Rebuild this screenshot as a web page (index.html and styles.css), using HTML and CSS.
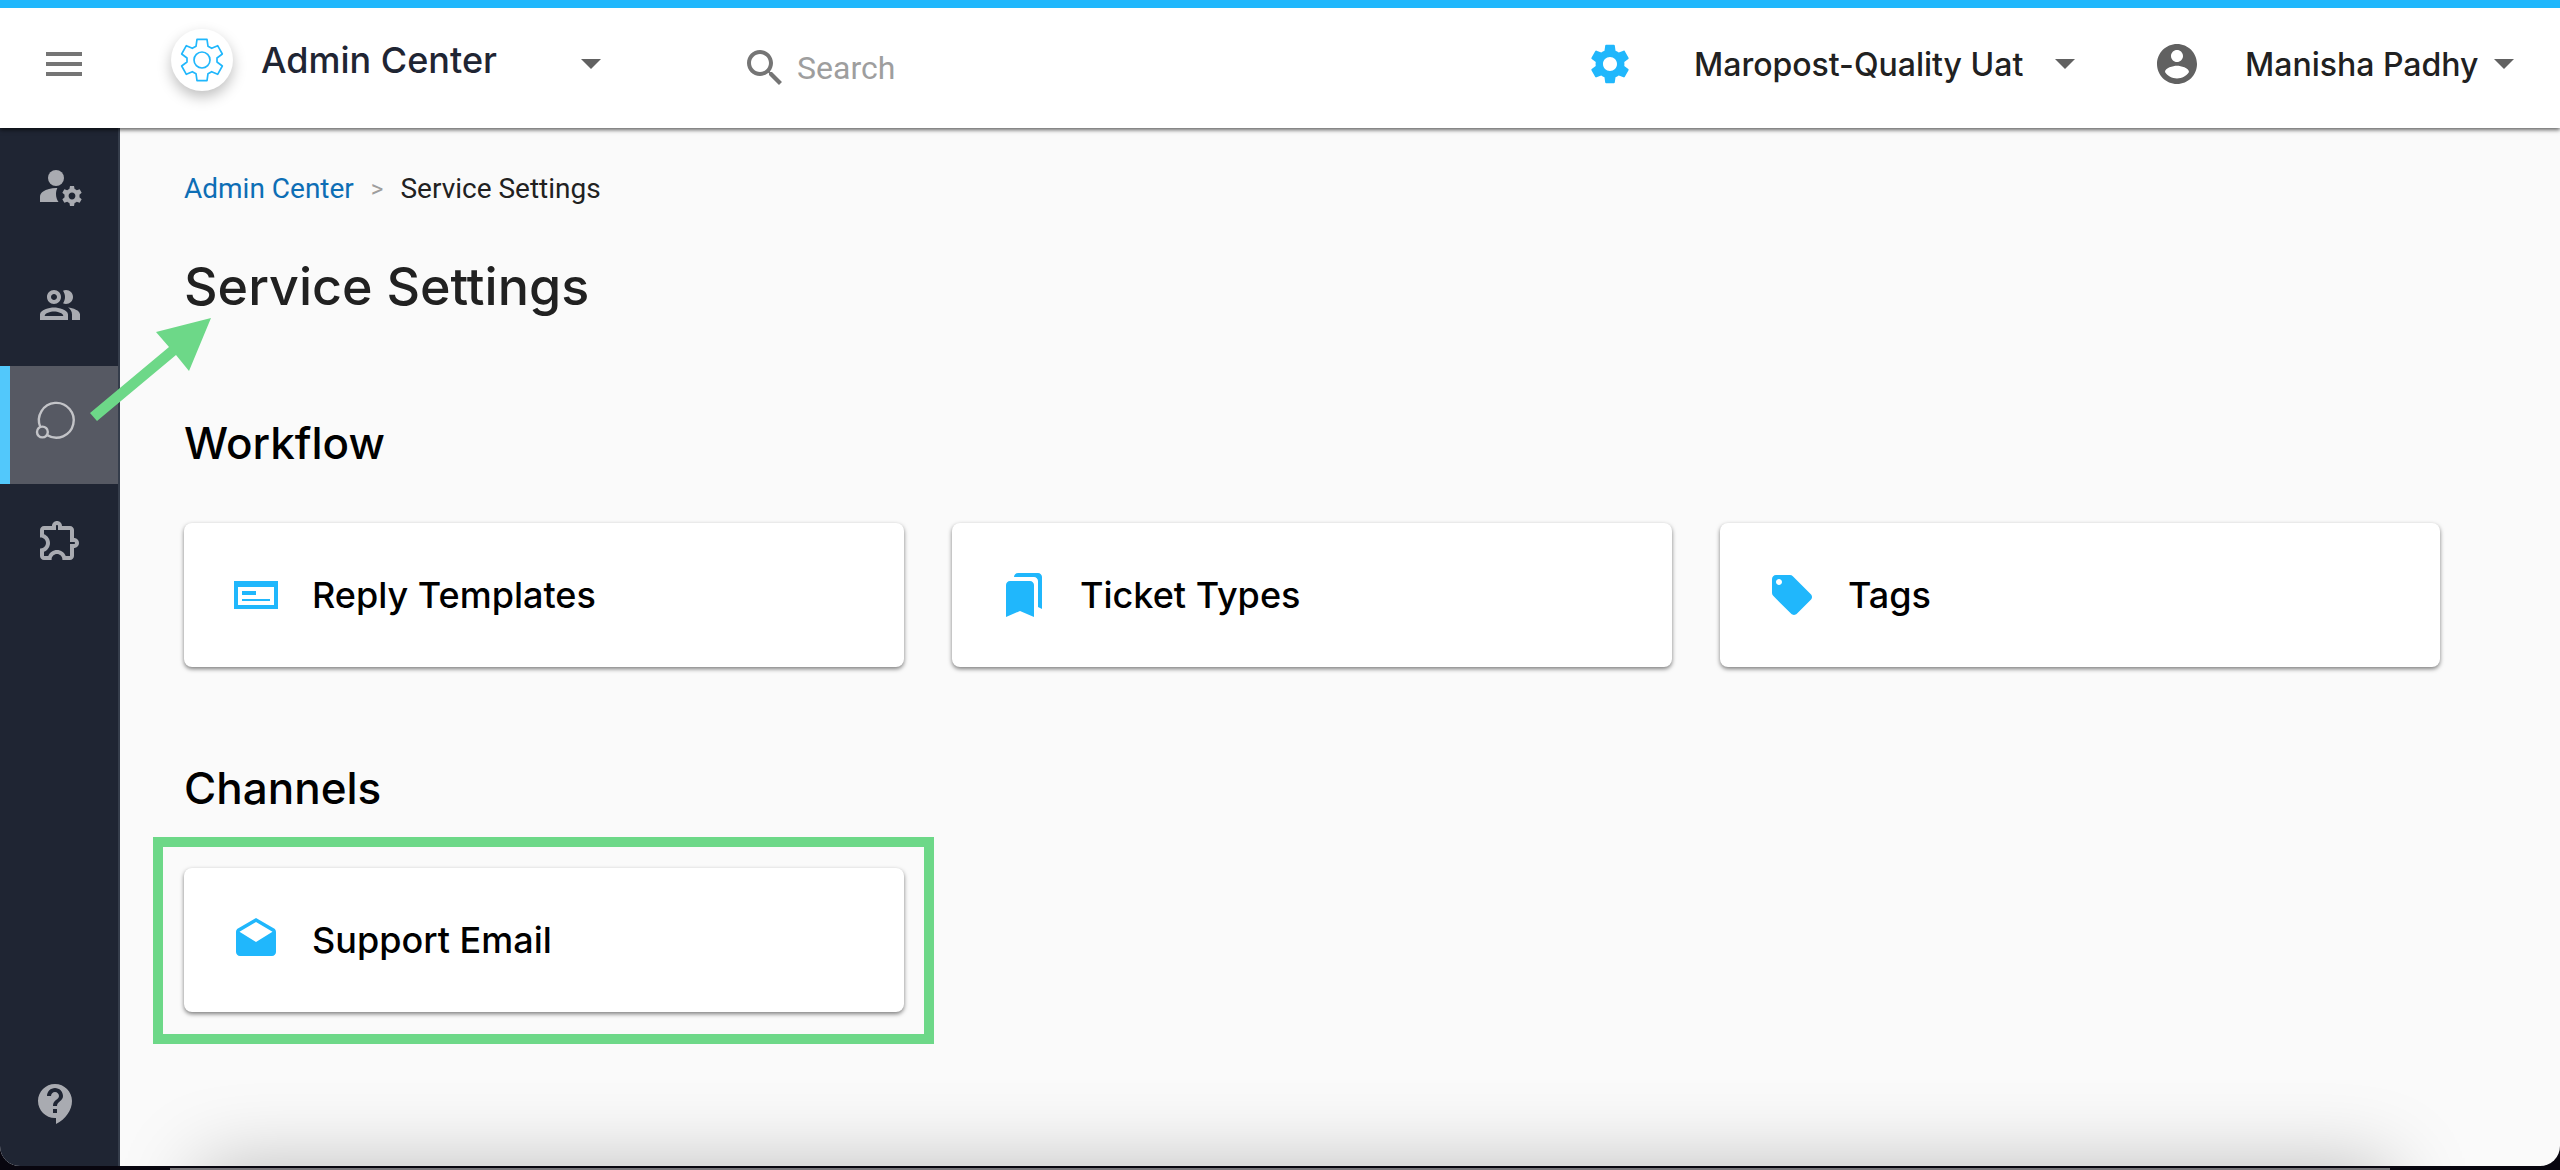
FILE: index.html
```html
<!DOCTYPE html>
<html lang="en">

<head>
    <meta charset="UTF-8">
    <meta name="viewport" content="width=device-width, initial-scale=1.0">
    <title>Service Settings</title>
    <link rel="stylesheet" href="styles.css">
</head>

<body>
    <div class="window">
        <header class="topbar">
            <button class="icon-btn menu-btn" aria-label="Menu">
                <svg class="icon" viewBox="0 0 24 24"><path d="M3 18h18v-2H3v2zm0-5h18v-2H3v2zm0-7v2h18V6H3z"/></svg>
            </button>
            <button class="app-switch">
                <span class="app-logo">
                    <svg viewBox="-72 -72 144 144"><path d="M-15-62H15L18-41 29-35 47-43 61-18 45-6V6L61 18 47 43 29 35 18 41 15 62H-15L-18 41-29 35-47 43-61 18-45 6V-6L-61-18-47-43-29-35-18-41z"/><circle r="24"/></svg>
                </span>
                <span class="app-name">Admin Center</span>
                <span class="caret"></span>
            </button>
            <label class="search">
                <svg class="icon" viewBox="0 0 24 24"><path d="M15.5 14h-.79l-.28-.27C15.41 12.59 16 11.11 16 9.5 16 5.91 13.09 3 9.5 3S3 5.91 3 9.5 5.91 16 9.5 16c1.61 0 3.09-.59 4.23-1.57l.27.28v.79l5 4.99L20.49 19l-4.99-5zm-6 0C7.01 14 5 11.99 5 9.5S7.01 5 9.5 5 14 7.01 14 9.5 11.99 14 9.5 14z"/></svg>
                <input type="text" placeholder="Search" aria-label="Search">
            </label>
            <button class="icon-btn settings-btn" aria-label="Settings">
                <svg class="icon" viewBox="0 0 24 24"><path d="M19.14 12.94c.04-.3.06-.61.06-.94 0-.32-.02-.64-.07-.94l2.03-1.58c.18-.14.23-.41.12-.61l-1.92-3.32c-.12-.22-.37-.29-.59-.22l-2.39.96c-.5-.38-1.03-.7-1.62-.94l-.36-2.54c-.04-.24-.24-.41-.48-.41h-3.84c-.24 0-.43.17-.47.41l-.36 2.54c-.59.24-1.13.57-1.62.94l-2.39-.96c-.22-.08-.47 0-.59.22L2.74 8.87c-.12.21-.08.47.12.61l2.03 1.58c-.05.3-.09.63-.09.94s.02.64.07.94l-2.03 1.58c-.18.14-.23.41-.12.61l1.92 3.32c.12.22.37.29.59.22l2.39-.96c.5.38 1.03.7 1.62.94l.36 2.54c.05.24.24.41.48.41h3.84c.24 0 .44-.17.47-.41l.36-2.54c.59-.24 1.13-.56 1.62-.94l2.39.96c.22.08.47 0 .59-.22l1.92-3.32c.12-.22.07-.47-.12-.61l-2.01-1.58zM12 15.5c-1.93 0-3.500-1.570-3.500-3.500s1.570-3.500 3.500-3.500 3.500 1.570 3.500 3.500-1.570 3.500-3.500 3.500z"/></svg>
            </button>
            <button class="account-btn">
                <span class="account-name">Maropost-Quality Uat</span>
                <span class="caret"></span>
            </button>
            <button class="user-btn">
                <svg class="icon" viewBox="0 0 24 24"><path d="M12 2C6.48 2 2 6.48 2 12s4.48 10 10 10 10-4.48 10-10S17.52 2 12 2zm0 3c1.66 0 3 1.34 3 3s-1.34 3-3 3-3-1.34-3-3 1.34-3 3-3zm0 14.2c-2.5 0-4.71-1.28-6-3.22.03-1.99 4-3.08 6-3.08 1.99 0 5.97 1.09 6 3.08-1.29 1.94-3.5 3.22-6 3.22z"/></svg>
                <span class="user-name">Manisha Padhy</span>
                <span class="caret"></span>
            </button>
        </header>

        <div class="body">
            <nav class="sidebar">
                <a href="#" aria-label="Account settings">
                    <svg class="icon" viewBox="0 0 24 24"><circle cx="10" cy="8" r="4"/><path d="M10.67 13.02c-.22-.01-.44-.02-.67-.02-2.42 0-4.68.67-6.61 1.82C2.51 15.34 2 16.32 2 17.35V20h9.26c-.79-1.13-1.26-2.51-1.26-4 0-1.07.25-2.07.67-2.98z"/><path d="M21.75 17c0-.22-.03-.42-.06-.63l1.14-1.01-1-1.73-1.45.49c-.32-.27-.68-.48-1.08-.63L19 12h-2l-.3 1.49c-.4.15-.76.36-1.08.63l-1.45-.49-1 1.73 1.14 1.01c-.03.21-.06.41-.06.63s.03.42.06.63l-1.14 1.01 1 1.73 1.45-.49c.32.27.68.48 1.08.63L17 22h2l.3-1.49c.4-.15.76-.36 1.08-.63l1.45.49 1-1.73-1.14-1.01c.03-.21.06-.41.06-.63zM18 18.700c-.94 0-1.700-.76-1.700-1.700s.76-1.700 1.700-1.700 1.700.76 1.700 1.700-.76 1.700-1.700 1.700z"/></svg>
                </a>
                <a href="#" aria-label="Users">
                    <svg class="icon" viewBox="0 0 24 24"><path d="M9 13.75c-2.34 0-7 1.17-7 3.5V20h14v-2.75c0-2.33-4.66-3.5-7-3.5zM4.34 18c0-1.400 2.870-2.250 4.660-2.250s4.660.85 4.660 2.250H4.340zM9 12c1.93 0 3.5-1.57 3.5-3.5S10.93 5 9 5 5.5 6.57 5.5 8.5 7.07 12 9 12zm0-5c.83 0 1.5.67 1.5 1.5S9.83 10 9 10s-1.5-.67-1.5-1.5S8.17 7 9 7zm7.04 6.81c1.16.84 1.96 1.96 1.96 3.44V20h4v-2.75c0-2.02-3.5-3.17-5.96-3.44zM15 12c1.93 0 3.5-1.57 3.5-3.5S16.93 5 15 5c-.54 0-1.04.13-1.5.35.63.89 1 1.98 1 3.15s-.37 2.26-1 3.15c.46.22.96.35 1.5.35z"/></svg>
                </a>
                <a href="#" class="active" aria-label="Service">
                    <svg class="icon line" viewBox="0 0 24 24"><path d="M4.100 14.400A8.700 8.700 0 1 1 7.700 18.600"/><circle cx="5.200" cy="17" r="2.700"/></svg>
                </a>
                <a href="#" aria-label="Extensions">
                    <svg class="icon" viewBox="0 0 24 24"><path d="M10.5 4.5c.28 0 .5.22.5.5v2h6v6h2c.28 0 .5.22.5.5s-.22.5-.5.5h-2v6h-2.12c-.68-1.75-2.39-3-4.38-3s-3.7 1.25-4.38 3H4v-2.12c1.75-.68 3-2.39 3-4.38 0-1.99-1.24-3.7-2.99-4.38L4 7h6V5c0-.28.22-.5.5-.5m0-2C9.12 2.5 8 3.62 8 5H4c-1.1 0-1.99.9-1.99 2v3.8h.29c1.49 0 2.7 1.21 2.7 2.7s-1.21 2.7-2.7 2.7H2V20c0 1.1.9 2 2 2h3.8v-.3c0-1.49 1.21-2.7 2.7-2.7s2.7 1.21 2.7 2.7v.3H17c1.1 0 2-.9 2-2v-4c1.38 0 2.5-1.12 2.5-2.5S20.38 11 19 11V7c0-1.1-.9-2-2-2h-4c0-1.38-1.12-2.5-2.5-2.5z"/></svg>
                </a>
                <a href="#" class="help" aria-label="Help">
                    <svg class="icon" viewBox="0 0 24 24"><path d="M11.5 2C6.81 2 3 5.81 3 10.5S6.81 19 11.5 19h.5v3c4.86-2.34 8-7 8-11.5C20 5.81 16.19 2 11.5 2zm1 14.500h-2v-2h2v2zm0-3.500h-2c0-3.250 3-3 3-5 0-1.100-.9-2-2-2s-2 .9-2 2h-2c0-2.210 1.790-4 4-4s4 1.790 4 4c0 2.500-3 2.750-3 5z"/></svg>
                </a>
            </nav>

            <main class="content">
                <div class="breadcrumb">
                    <a href="#">Admin Center</a>
                    <span class="sep">&gt;</span>
                    <span>Service Settings</span>
                </div>
                <h1>Service Settings</h1>

                <section>
                    <h2>Workflow</h2>
                    <div class="cards">
                        <a href="#" class="card">
                            <svg class="icon" viewBox="0 0 24 24"><path d="M1 5v14h22V5H1zm20 12H3V8h18v9z"/><path d="M5 10h7v2H5zM5 14h14v1H5z"/></svg>
                            Reply Templates
                        </a>
                        <a href="#" class="card">
                            <svg class="icon" viewBox="0 0 24 24"><path d="M19 18l2 1V3c0-1.1-.9-2-2-2H8.99C7.89 1 7 1.9 7 3h10c1.1 0 2 .9 2 2v13zM15 5H5c-1.1 0-2 .9-2 2v16l7-3 7 3V7c0-1.1-.9-2-2-2z"/></svg>
                            Ticket Types
                        </a>
                        <a href="#" class="card">
                            <svg class="icon" viewBox="0 0 24 24"><path d="M21.41 11.58l-9-9C12.05 2.22 11.55 2 11 2H4c-1.1 0-2 .9-2 2v7c0 .55.22 1.05.59 1.42l9 9c.36.36.86.58 1.41.58.55 0 1.05-.22 1.41-.59l7-7c.37-.36.59-.86.59-1.41 0-.55-.23-1.06-.59-1.42zM5.5 7C4.67 7 4 6.33 4 5.5S4.67 4 5.5 4 7 4.67 7 5.5 6.33 7 5.5 7z"/></svg>
                            Tags
                        </a>
                    </div>
                </section>

                <section>
                    <h2>Channels</h2>
                    <div class="cards">
                        <a href="#" class="card highlight">
                            <svg class="icon" viewBox="0 0 24 24"><path d="M21.99 8c0-.72-.37-1.35-.94-1.7L12 1 2.95 6.3C2.38 6.65 2 7.28 2 8v10c0 1.1.9 2 2 2h16c1.1 0 2-.9 2-2l-.01-10zM12 13L3.74 7.84 12 3l8.26 4.84L12 13z"/></svg>
                            Support Email
                        </a>
                    </div>
                </section>
            </main>
        </div>

        <svg class="arrow" viewBox="0 0 124 106"><path d="M121 1L99 54 86 38 7 104 0 96 79 30 66 15z"/></svg>
    </div>
</body>

</html>
```
FILE: styles.css
```css
* {
    box-sizing: border-box;
}

body {
    margin: 0;
    font-family: Roboto, Arial, sans-serif;
    font-size: 28px;
    color: #212121;
    background-color: #08060f;
}

/* light edge under the window */
body::after {
    content: "";
    display: block;
    height: 2px;
    margin: 2px 170px 0;
    background-color: #77757a;
}

a {
    text-decoration: none;
    color: inherit;
}

button {
    display: flex;
    align-items: center;
    padding: 0;
    border: none;
    background: none;
    color: #212121;
    font-family: Inter, Arial, sans-serif;
    font-size: 32px;
    font-weight: 500;
    text-align: left;
    white-space: nowrap;
    cursor: pointer;
}

.icon {
    display: block;
    flex: none;
    width: 48px;
    height: 48px;
    fill: currentColor;
}

.window {
    position: relative;
    display: flex;
    flex-direction: column;
    min-height: calc(100vh - 4px);
    overflow: hidden;
    border-radius: 0 0 20px 20px;
    background-color: #fafafa;
}

/* top bar */
.topbar {
    position: relative;
    z-index: 1;
    display: flex;
    align-items: center;
    height: 128px;
    padding: 0 46px 8px 40px;
    border-top: 8px solid #20b7fc;
    background-color: #fff;
    box-shadow: 0 2px 4px rgba(0, 0, 0, 0.6);
}

.menu-btn {
    color: #757575;
}

.app-switch {
    margin-left: 83px;
    font-size: 36px;
    color: #1f2533;
}

.app-logo {
    display: flex;
    align-items: center;
    justify-content: center;
    width: 62px;
    height: 62px;
    margin: 0 28px 8px 0;
    border-radius: 50%;
    box-shadow: 0 6px 14px rgba(0, 0, 0, 0.25);
}

.app-logo svg {
    width: 48px;
    height: 48px;
    fill: none;
    stroke: #20b7fc;
    stroke-width: 5;
    stroke-linejoin: round;
}

.app-name {
    width: 320px;
    padding-bottom: 8px;
}

.caret {
    border: 10px solid transparent;
    border-top-color: #616161;
    border-bottom: none;
}

.search {
    display: flex;
    flex: 1;
    align-items: center;
    gap: 8px;
    margin: 8px 0 0 140px;
    color: #757575;
}

.search input {
    flex: 1;
    min-width: 0;
    padding: 0;
    border: none;
    outline: none;
    background: none;
    font-family: inherit;
    font-size: 32px;
}

.search input::placeholder {
    color: #9e9e9e;
}

.settings-btn {
    margin-right: 60px;
    color: #20b7fc;
}

.account-btn {
    margin-right: 78px;
}

.account-name {
    width: 361px;
}

.user-name {
    width: 249px;
}

.user-btn .icon {
    margin-right: 44px;
    color: #616161;
}

/* side navigation */
.body {
    position: relative;
    display: flex;
    flex: 1;
}

.sidebar {
    display: flex;
    flex-direction: column;
    width: 120px;
    padding-top: 2px;
    border-right: 2px solid #353d4b;
    background-color: #1f2533;
    color: #a9abb1;
}

.sidebar a {
    display: flex;
    align-items: center;
    height: 118px;
    padding: 0 0 6px 36px;
}

.sidebar .active {
    padding-left: 22px;
    border-left: 10px solid #52c8fb;
    background-color: #565963;
    color: #c3c4c8;
}

.sidebar .line {
    fill: none;
    stroke: currentColor;
    stroke-width: 1.2;
}

.sidebar .help {
    margin-top: auto;
    padding-left: 32px;
}

/* page */
.content {
    position: relative;
    flex: 1;
    overflow: hidden;
    padding: 41px 120px 0 64px;
}

/* shadow rising from the bottom edge */
.content::after {
    content: "";
    position: absolute;
    top: 100%;
    right: 170px;
    left: 80px;
    height: 200px;
    box-shadow: 0 0 80px rgba(0, 0, 0, 0.25);
}

.breadcrumb {
    display: flex;
    gap: 17px;
    line-height: 40px;
}

.breadcrumb a {
    color: #0d6eb5;
}

.breadcrumb .sep {
    color: #9e9e9e;
    font-size: 24px;
}

h1,
h2 {
    margin: 0;
    font-family: Inter, Arial, sans-serif;
    font-weight: 500;
}

h1 {
    margin: 48px 0 102px;
    font-size: 52px;
    line-height: 60px;
}

h2 {
    font-size: 44px;
    line-height: 48px;
    color: #000;
}

section {
    margin-bottom: 97px;
}

.cards {
    display: grid;
    grid-template-columns: repeat(3, 1fr);
    gap: 48px;
    margin-top: 56px;
}

.card {
    position: relative;
    display: flex;
    align-items: center;
    gap: 32px;
    height: 144px;
    padding: 0 48px;
    border-radius: 8px;
    background-color: #fff;
    box-shadow: 0 2px 4px rgba(0, 0, 0, 0.5);
    color: #000;
    font-family: Inter, Arial, sans-serif;
    font-size: 36px;
    font-weight: 500;
}

.card .icon {
    color: #20b7fc;
}

.highlight::after {
    content: "";
    position: absolute;
    inset: -31px -30px -32px -31px;
    border: 10px solid #6dd888;
}

.arrow {
    position: absolute;
    z-index: 2;
    top: 317px;
    left: 90px;
    width: 124px;
    height: 106px;
    fill: #6dd888;
}
```
